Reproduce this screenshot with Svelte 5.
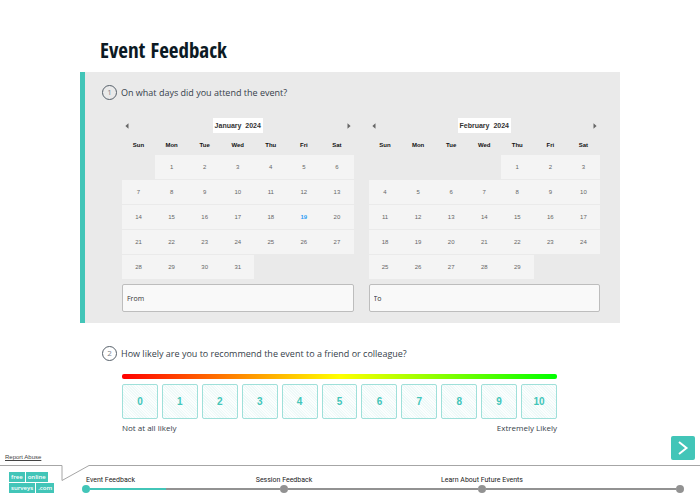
<script lang="ts">
	const weekdays = ['Sun', 'Mon', 'Tue', 'Wed', 'Thu', 'Fri', 'Sat'];

	const calendars = [
		{ month: 'January', year: 2024, offset: 1, days: 31, today: 19, field: 'From' },
		{ month: 'February', year: 2024, offset: 4, days: 29, today: 0, field: 'To' }
	];

	const steps = [
		{ name: 'Event Feedback', done: 40 },
		{ name: 'Session Feedback', done: 0 },
		{ name: 'Learn About Future Events', done: 0 },
		{ name: '', done: 0 }
	];

	const scores = Array.from({ length: 11 }, (_, i) => i);

	let score = $state<number | null>(null);

	function weeks(offset: number, days: number) {
		return Array.from({ length: 5 }, (_, w) =>
			Array.from({ length: 7 }, (_, d) => {
				const n = w * 7 + d - offset + 1;
				return n > 0 && n <= days ? n : 0;
			})
		);
	}
</script>

<div class="page">
	<main>
		<h1>Event Feedback</h1>

		<section class="question active">
			<h2><span class="num">1</span>On what days did you attend the event?</h2>
			<div class="body calendars">
				{#each calendars as cal}
					<div class="calendar">
						<div class="month">
							<button class="nav" aria-label="Previous month">
								<svg width="4" height="6" viewBox="0 0 4 6"><path d="M3.5 0.3v5.4L0.4 3z" /></svg>
							</button>
							<span class="name">{cal.month}&nbsp; {cal.year}</span>
							<button class="nav" aria-label="Next month">
								<svg width="4" height="6" viewBox="0 0 4 6"><path d="M0.5 0.3v5.4L3.6 3z" /></svg>
							</button>
						</div>
						<table>
							<thead>
								<tr>
									{#each weekdays as day}
										<th>{day}</th>
									{/each}
								</tr>
							</thead>
							<tbody>
								{#each weeks(cal.offset, cal.days) as week}
									<tr>
										{#each week as day}
											<td>
												{#if day}
													<button class="day" class:today={day === cal.today}>{day}</button>
												{/if}
											</td>
										{/each}
									</tr>
								{/each}
							</tbody>
						</table>
						<input class="date" type="text" placeholder={cal.field} aria-label={cal.field} />
					</div>
				{/each}
			</div>
		</section>

		<section class="question">
			<h2><span class="num">2</span>How likely are you to recommend the event to a friend or colleague?</h2>
			<div class="body rating">
				<div class="spectrum"></div>
				<div class="scores">
					{#each scores as n}
						<label class="score" class:selected={score === n}>
							<input type="radio" name="score" value={n} bind:group={score} />
							{n}
						</label>
					{/each}
				</div>
				<div class="ends">
					<span>Not at all likely</span>
					<span>Extremely Likely</span>
				</div>
			</div>
		</section>
	</main>

	<div class="actions">
		<a class="report" href="#report">Report Abuse</a>
		<button class="next" aria-label="Next page">
			<svg width="24" height="24" viewBox="0 0 24 24">
				<path d="M8 6L15.5 12L8 18" fill="none" stroke="#fff" stroke-width="2" />
			</svg>
		</button>
	</div>

	<footer>
		<svg class="notch" width="90" height="18" viewBox="0 0 90 18">
			<path d="M62 0H89V1H62z" fill="#fff" />
			<path d="M61 0.5H62V15.5L89 0.5H90" fill="none" stroke="#a6a6a6" />
		</svg>
		<a class="logo" href="#home">
			<span class="row"><span class="tag">free</span><span class="tag">online</span></span>
			<span class="row"><span class="tag">surveys</span><span class="tag">.com</span></span>
		</a>
		<ol>
			{#each steps as step, i}
				<li class:current={i === 0}>
					<div class="marker">
						<span class="label">{step.name}</span>
						<span class="dot"></span>
					</div>
					{#if i < steps.length - 1}
						<div class="track"><div class="fill" style="width: {step.done}%"></div></div>
					{/if}
				</li>
			{/each}
		</ol>
	</footer>
</div>

<style>
	:global(body) {
		margin: 0;
		background: #fff;
	}
	.page {
		display: flex;
		flex-direction: column;
		min-height: 100vh;
		font-family: 'Open Sans', sans-serif;
		color: #36414a;
	}
	button {
		border: 0;
		padding: 0;
		background: none;
		font: inherit;
		color: inherit;
		cursor: pointer;
	}
	svg {
		display: block;
	}
	main {
		padding: 36px 80px 0;
	}
	h1 {
		margin: 0 0 8px 20px;
		font-family: 'Open Sans Condensed', 'Open Sans', sans-serif;
		font-size: 21px;
		line-height: 28px;
		font-weight: 700;
		color: #0c1a24;
	}
	.question {
		padding: 12px 20px 0 17px;
		border-left: 5px solid transparent;
	}
	.active {
		padding-bottom: 11px;
		background: #eaeaea;
		border-left-color: #42c5b8;
		margin-bottom: 10px;
	}
	h2 {
		display: flex;
		align-items: center;
		gap: 4px;
		margin: 0;
		font-size: 9px;
		line-height: 17px;
		font-weight: 400;
	}
	.num {
		box-sizing: border-box;
		width: 15px;
		height: 15px;
		border: 1px solid #56606a;
		border-radius: 50%;
		font-size: 8px;
		line-height: 12px;
		text-align: center;
		color: #7c848b;
	}
	.body {
		margin-left: 20px;
	}
	.calendars {
		display: grid;
		grid-template-columns: 1fr 1fr;
		gap: 15px;
		margin-top: 17px;
		font-family: 'Liberation Sans', Arial, sans-serif;
	}
	.month {
		display: flex;
		justify-content: space-between;
		align-items: center;
		padding: 0 3px;
	}
	.nav {
		fill: #666;
	}
	.name {
		padding: 0 2px;
		background: #fff;
		font-size: 7px;
		line-height: 15px;
		font-weight: 700;
		color: #333;
	}
	table {
		width: 100%;
		table-layout: fixed;
		border-collapse: collapse;
	}
	th {
		padding: 2px 0 0;
		height: 20px;
		font-size: 6px;
		font-weight: 700;
		color: #111;
	}
	td {
		padding: 0 0 1px;
		height: 24px;
	}
	.day {
		display: block;
		width: 100%;
		height: 24px;
		background: #f4f4f4;
		font-size: 6px;
		color: #666;
	}
	.today {
		font-weight: 700;
		color: #2a9df4;
	}
	.date {
		box-sizing: border-box;
		display: block;
		width: 100%;
		height: 28px;
		margin-top: 4px;
		padding: 0 4px;
		border: 1px solid #bdbdbd;
		border-radius: 2px;
		background: #f9f9f9;
		font-family: 'Open Sans', sans-serif;
		font-size: 7px;
		color: #333;
	}
	.date::placeholder {
		color: #333;
		opacity: 1;
	}
	.rating {
		margin-top: 12px;
		margin-right: 43px;
	}
	.spectrum {
		height: 5px;
		border-radius: 2px;
		background: linear-gradient(to right, #f00, #ff0 50%, #0f0);
	}
	.scores {
		display: grid;
		grid-template-columns: repeat(11, 1fr);
		gap: 4px;
		margin-top: 5px;
	}
	.score {
		box-sizing: border-box;
		display: flex;
		align-items: center;
		justify-content: center;
		height: 35px;
		border: 1px solid #9fe0da;
		border-radius: 2px;
		background: repeating-linear-gradient(45deg, #eef9f8 0 1px, #fbfefe 1px 2px);
		font-family: 'Liberation Sans', Arial, sans-serif;
		font-size: 10px;
		font-weight: 700;
		color: #42c5b8;
		cursor: pointer;
	}
	.score input {
		appearance: none;
		width: 0;
		height: 0;
		margin: 0;
	}
	.selected {
		background: #42c5b8;
		color: #fff;
	}
	.ends {
		display: flex;
		justify-content: space-between;
		margin-top: 3px;
		font-size: 8px;
		line-height: 12px;
	}
	.actions {
		display: flex;
		justify-content: space-between;
		align-items: flex-end;
		margin-top: auto;
		padding: 0 5px 5px;
	}
	.report {
		font-family: 'Liberation Sans', Arial, sans-serif;
		font-size: 6px;
		line-height: 6px;
		color: #444;
	}
	.next {
		border-radius: 2px;
		background: #42c5b8;
	}
	footer {
		position: relative;
		display: flex;
		align-items: flex-start;
		gap: 29px;
		height: 34px;
		padding: 0 16px 0 9px;
		border-top: 1px solid #a6a6a6;
	}
	.notch {
		position: absolute;
		top: -1px;
		left: 0;
	}
	.logo {
		display: flex;
		flex-direction: column;
		gap: 1px;
		width: 44px;
		margin-top: 6px;
		text-decoration: none;
	}
	.row {
		display: flex;
		gap: 1px;
	}
	.tag {
		padding: 0 2px;
		background: #42c5b8;
		font-size: 6px;
		line-height: 10px;
		font-weight: 600;
		color: #fff;
	}
	ol {
		flex: 1;
		display: flex;
		margin: 9px 0 0;
		padding: 0;
		list-style: none;
		font-family: Roboto, sans-serif;
		font-size: 7px;
		line-height: 10px;
		color: #222;
	}
	li {
		flex: 1;
		display: flex;
		align-items: flex-end;
	}
	li:last-child {
		flex: none;
	}
	.marker {
		display: flex;
		flex-direction: column;
		align-items: center;
		width: 8px;
	}
	.current .marker {
		align-items: flex-start;
	}
	.label {
		white-space: nowrap;
	}
	.current .label {
		padding-left: 4px;
	}
	.dot {
		width: 8px;
		height: 8px;
		border-radius: 50%;
		background: #929292;
	}
	.current .dot {
		background: #42c5b8;
	}
	.track {
		flex: 1;
		height: 2px;
		margin-bottom: 3px;
		background: #929292;
	}
	.fill {
		height: 2px;
		background: #42c5b8;
	}
</style>
